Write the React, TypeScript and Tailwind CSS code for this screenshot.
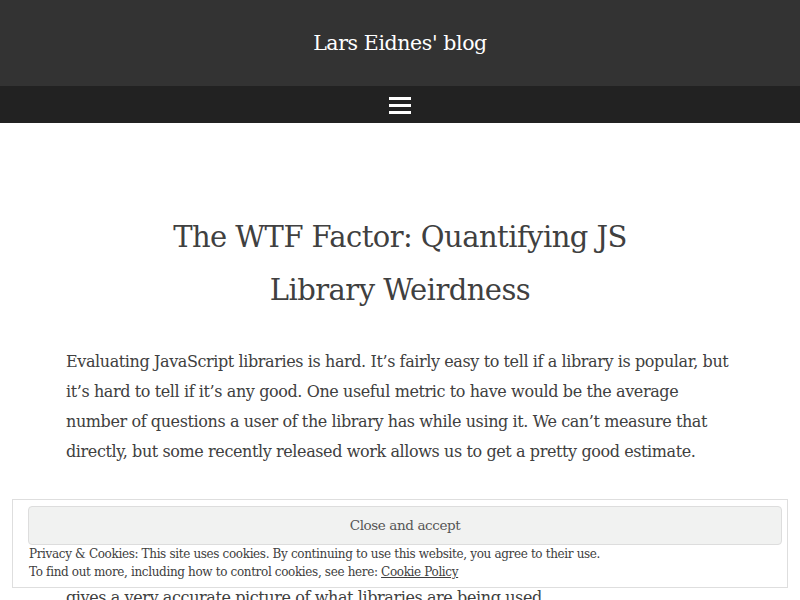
import React from "react";

export default function App() {
  const serif = { fontFamily: '"DejaVu Serif", "Liberation Serif", serif' };
  return (
    <div className="relative min-h-[600px] bg-white text-[#404040]" style={serif}>
      <header className="flex h-[86px] items-center justify-center bg-[#333333]">
        <h1 className="text-[20.5px] text-white tracking-[-0.4px]">Lars Eidnes' blog</h1>
      </header>
      <nav className="flex h-[37px] items-center justify-center bg-[#222222]">
        <svg width="22" height="17" viewBox="0 0 22 17" className="mt-[1px]">
          <rect x="0" y="0" width="22" height="3" fill="#fff" />
          <rect x="0" y="7" width="22" height="3" fill="#fff" />
          <rect x="0" y="14" width="22" height="3" fill="#fff" />
        </svg>
      </nav>
      <main className="mx-auto w-[668px] pt-[88px]">
        <h2 className="mx-auto w-[500px] text-center text-[29px] leading-[53px] tracking-[-0.55px] text-[#404040]">
          The WTF Factor: Quantifying JS Library Weirdness
        </h2>
        <p className="mt-[30px] text-[16px] leading-[30px] tracking-[-0.4px]">
          Evaluating JavaScript libraries is hard. It’s fairly easy to tell if a library is popular, but it’s hard to tell if it’s any good. One useful metric to have would be the average number of questions a user of the library has while using it. We can’t measure that directly, but some recently released work allows us to get a pretty good estimate.
        </p>
        <p className="mt-[26px] text-[16px] leading-[30px] tracking-[-0.4px]">
          Stack Overflow recently released data on which libraries developers ask about.
          <br />
          Since nearly every developer uses Stack Overflow at some point, their traffic
          <br />
          data on questions about each library, combined with its usage numbers,
          <br />
          gives a very accurate picture of what libraries are being used.
        </p>
      </main>
      <div className="fixed left-[12px] right-[12px] top-[499px] h-[89px] border border-[#dedede] bg-white pl-[15px] pr-[5px] pt-[6px]">
        <button className="block h-[39px] w-full rounded-[4px] border border-[#dddddd] bg-[#f1f2f1] text-[13.5px] text-[#555555] tracking-[-0.4px]" style={serif}>
          Close and accept
        </button>
        <div className="pl-[1px] text-[12px] leading-[18px] text-[#404040] tracking-[-0.35px]">
          <div>Privacy &amp; Cookies: This site uses cookies. By continuing to use this website, you agree to their use.</div>
          <div>
            To find out more, including how to control cookies, see here: <span className="underline">Cookie Policy</span>
          </div>
        </div>
      </div>
    </div>
  );
}
